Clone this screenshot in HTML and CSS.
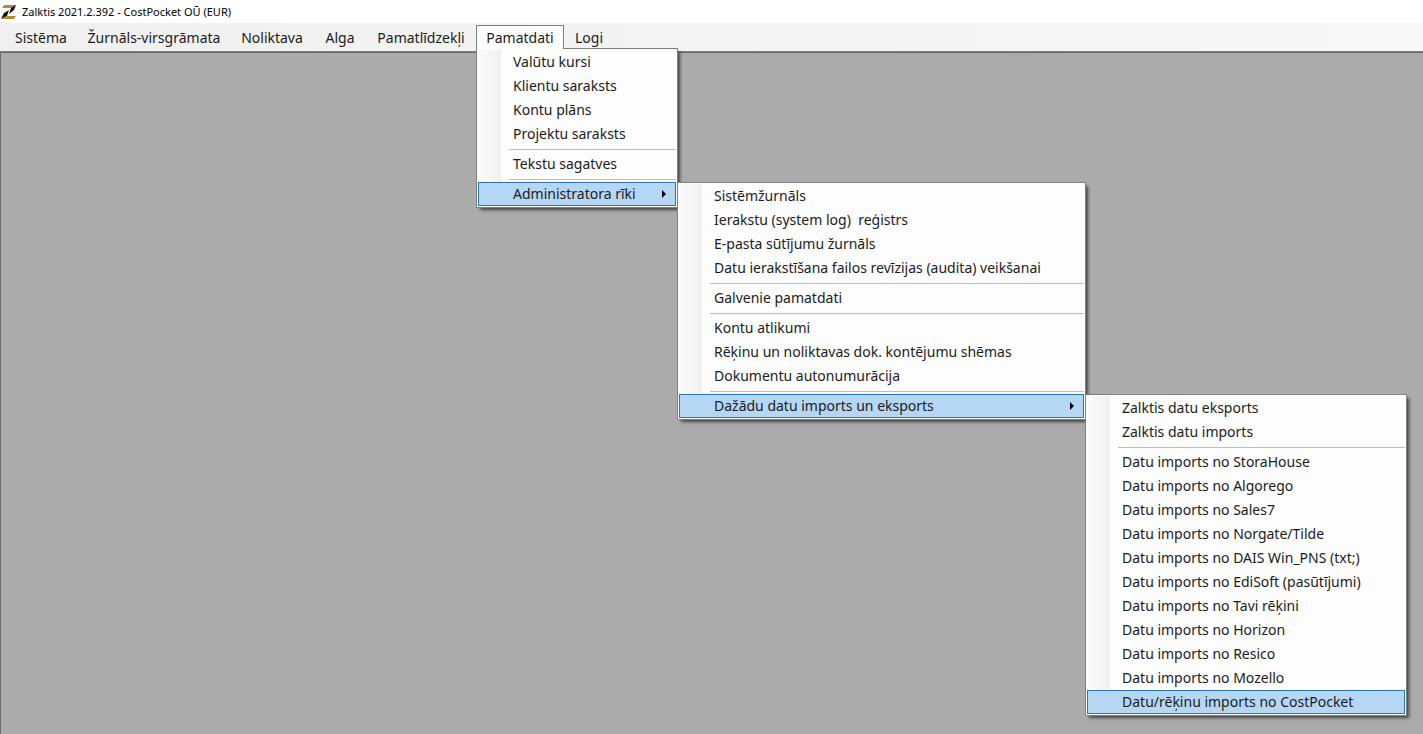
FILE: index.html
```html
<!DOCTYPE html>
<html lang="lv">
<head>
<meta charset="utf-8">
<title>Zalktis 2021.2.392 - CostPocket OŪ (EUR)</title>
<link rel="stylesheet" href="styles.css">
</head>
<body>
<div class="window">
  <header class="titlebar">
    <svg class="logo" viewBox="0 0 16 16" aria-hidden="true">
      <path d="M3 1H15L13 4H1Z" fill="#b08d3c"/>
      <path d="M15 1L13 6L8 10L10 4Z" fill="#17130c"/>
      <path d="M8 6L6 12L0 15L3 9Z" fill="#17130c"/>
      <path d="M6 12H15L13 15H0Z" fill="#b08d3c"/>
    </svg>
    <span class="title">Zalktis 2021.2.392 - CostPocket OŪ (EUR)</span>
  </header>
  <nav class="menubar">
    <button class="tab">Sistēma</button>
    <button class="tab">Žurnāls-virsgrāmata</button>
    <button class="tab">Noliktava</button>
    <button class="tab">Alga</button>
    <button class="tab">Pamatlīdzekļi</button>
    <div class="entry">
      <button class="tab tab-open" aria-expanded="true">Pamatdati</button>
      <div class="menu menu-main">
        <button class="item">Valūtu kursi</button>
        <button class="item">Klientu saraksts</button>
        <button class="item">Kontu plāns</button>
        <button class="item">Projektu saraksts</button>
        <hr class="sep">
        <button class="item">Tekstu sagatves</button>
        <hr class="sep">
        <div class="entry">
          <button class="item item-active" aria-expanded="true">Administratora rīki<svg class="arrow" viewBox="0 0 4 8" aria-hidden="true"><path d="M0 0L4 4L0 8Z"/></svg></button>
          <div class="menu submenu menu-admin">
            <button class="item">Sistēmžurnāls</button>
            <button class="item">Ierakstu (system log)&nbsp; reģistrs</button>
            <button class="item">E-pasta sūtījumu žurnāls</button>
            <button class="item">Datu ierakstīšana failos revīzijas (audita) veikšanai</button>
            <hr class="sep">
            <button class="item">Galvenie pamatdati</button>
            <hr class="sep">
            <button class="item">Kontu atlikumi</button>
            <button class="item">Rēķinu un noliktavas dok. kontējumu shēmas</button>
            <button class="item">Dokumentu autonumurācija</button>
            <hr class="sep">
            <div class="entry">
              <button class="item item-active" aria-expanded="true">Dažādu datu imports un eksports<svg class="arrow" viewBox="0 0 4 8" aria-hidden="true"><path d="M0 0L4 4L0 8Z"/></svg></button>
              <div class="menu submenu menu-import">
                <button class="item">Zalktis datu eksports</button>
                <button class="item">Zalktis datu imports</button>
                <hr class="sep">
                <button class="item">Datu imports no StoraHouse</button>
                <button class="item">Datu imports no Algorego</button>
                <button class="item">Datu imports no Sales7</button>
                <button class="item">Datu imports no Norgate/Tilde</button>
                <button class="item">Datu imports no DAIS Win_PNS (txt;)</button>
                <button class="item">Datu imports no EdiSoft (pasūtījumi)</button>
                <button class="item">Datu imports no Tavi rēķini</button>
                <button class="item">Datu imports no Horizon</button>
                <button class="item">Datu imports no Resico</button>
                <button class="item">Datu imports no Mozello</button>
                <button class="item item-active">Datu/rēķinu imports no CostPocket</button>
              </div>
            </div>
          </div>
        </div>
      </div>
    </div>
    <button class="tab">Logi</button>
  </nav>
  <main class="workspace"></main>
</div>
</body>
</html>
```
FILE: styles.css
```css
* {
  box-sizing: border-box;
}

body {
  margin: 0;
  font-family: "Noto Sans", "Open Sans", sans-serif;
  font-size: 14px;
  color: #1b1b1b;
}

button {
  font: inherit;
  color: inherit;
  margin: 0;
}

.window {
  min-height: 100vh;
  display: flex;
  flex-direction: column;
}

.titlebar {
  height: 23px;
  display: flex;
  align-items: center;
  gap: 5px;
  padding-left: 1px;
  background: #fff;
}

.logo {
  width: 16px;
  height: 16px;
}

.title {
  font-size: 11px;
  line-height: 16px;
  color: #000;
}

.menubar {
  height: 29px;
  padding: 2px 0 0 4px;
  display: grid;
  grid-template-columns: 74px 152px 84px 52px 110px 88px 50px;
  background: linear-gradient(90deg, #f0f0f0, #f8f8f8);
  border-bottom: 1px solid #808080;
}

.tab {
  display: block;
  width: 100%;
  height: 24px;
  padding: 0;
  border: 1px solid transparent;
  border-bottom: 0;
  background: none;
  line-height: 22px;
  white-space: nowrap;
}

.tab-open {
  border-color: #808080;
  background: #fdfdfd;
}

.entry {
  position: relative;
}

.menu {
  position: absolute;
  z-index: 1;
  padding: 1px;
  border: 1px solid #808080;
  background: linear-gradient(90deg, #fcfcfc, #f0f0f0) 1px 1px / 23px calc(100% - 2px) no-repeat #fdfdfd;
  box-shadow: 3px 3px 3px -1px rgba(0, 0, 0, 0.6);
}

.menu-main {
  top: 23px;
  left: 0;
  width: 202px;
}

/* Covers the top border of the menu where the open tab joins it. */
.menu-main::before {
  content: "";
  position: absolute;
  top: -1px;
  left: 0;
  width: 86px;
  height: 1px;
  background: #fdfdfd;
}

.submenu {
  top: 0;
  left: calc(100% + 1px);
}

.menu-admin {
  width: 409px;
}

.menu-import {
  width: 322px;
}

.item {
  display: flex;
  align-items: center;
  justify-content: space-between;
  width: 100%;
  height: 24px;
  padding: 0 9px 0 34px;
  border: 1px solid transparent;
  background: none;
  line-height: 22px;
  text-align: left;
  white-space: nowrap;
}

.item-active {
  border-color: #2478b4;
  background: #b5d7f3;
}

.arrow {
  width: 4px;
  height: 8px;
  fill: #000;
}

.sep {
  height: 1px;
  margin: 3px 0 2px 31px;
  border: 0;
  background: #bdbdbd;
}

.workspace {
  flex: 1;
  background: #ababab;
  border-top: 1px solid #696969;
  border-left: 1px solid #696969;
}
```
